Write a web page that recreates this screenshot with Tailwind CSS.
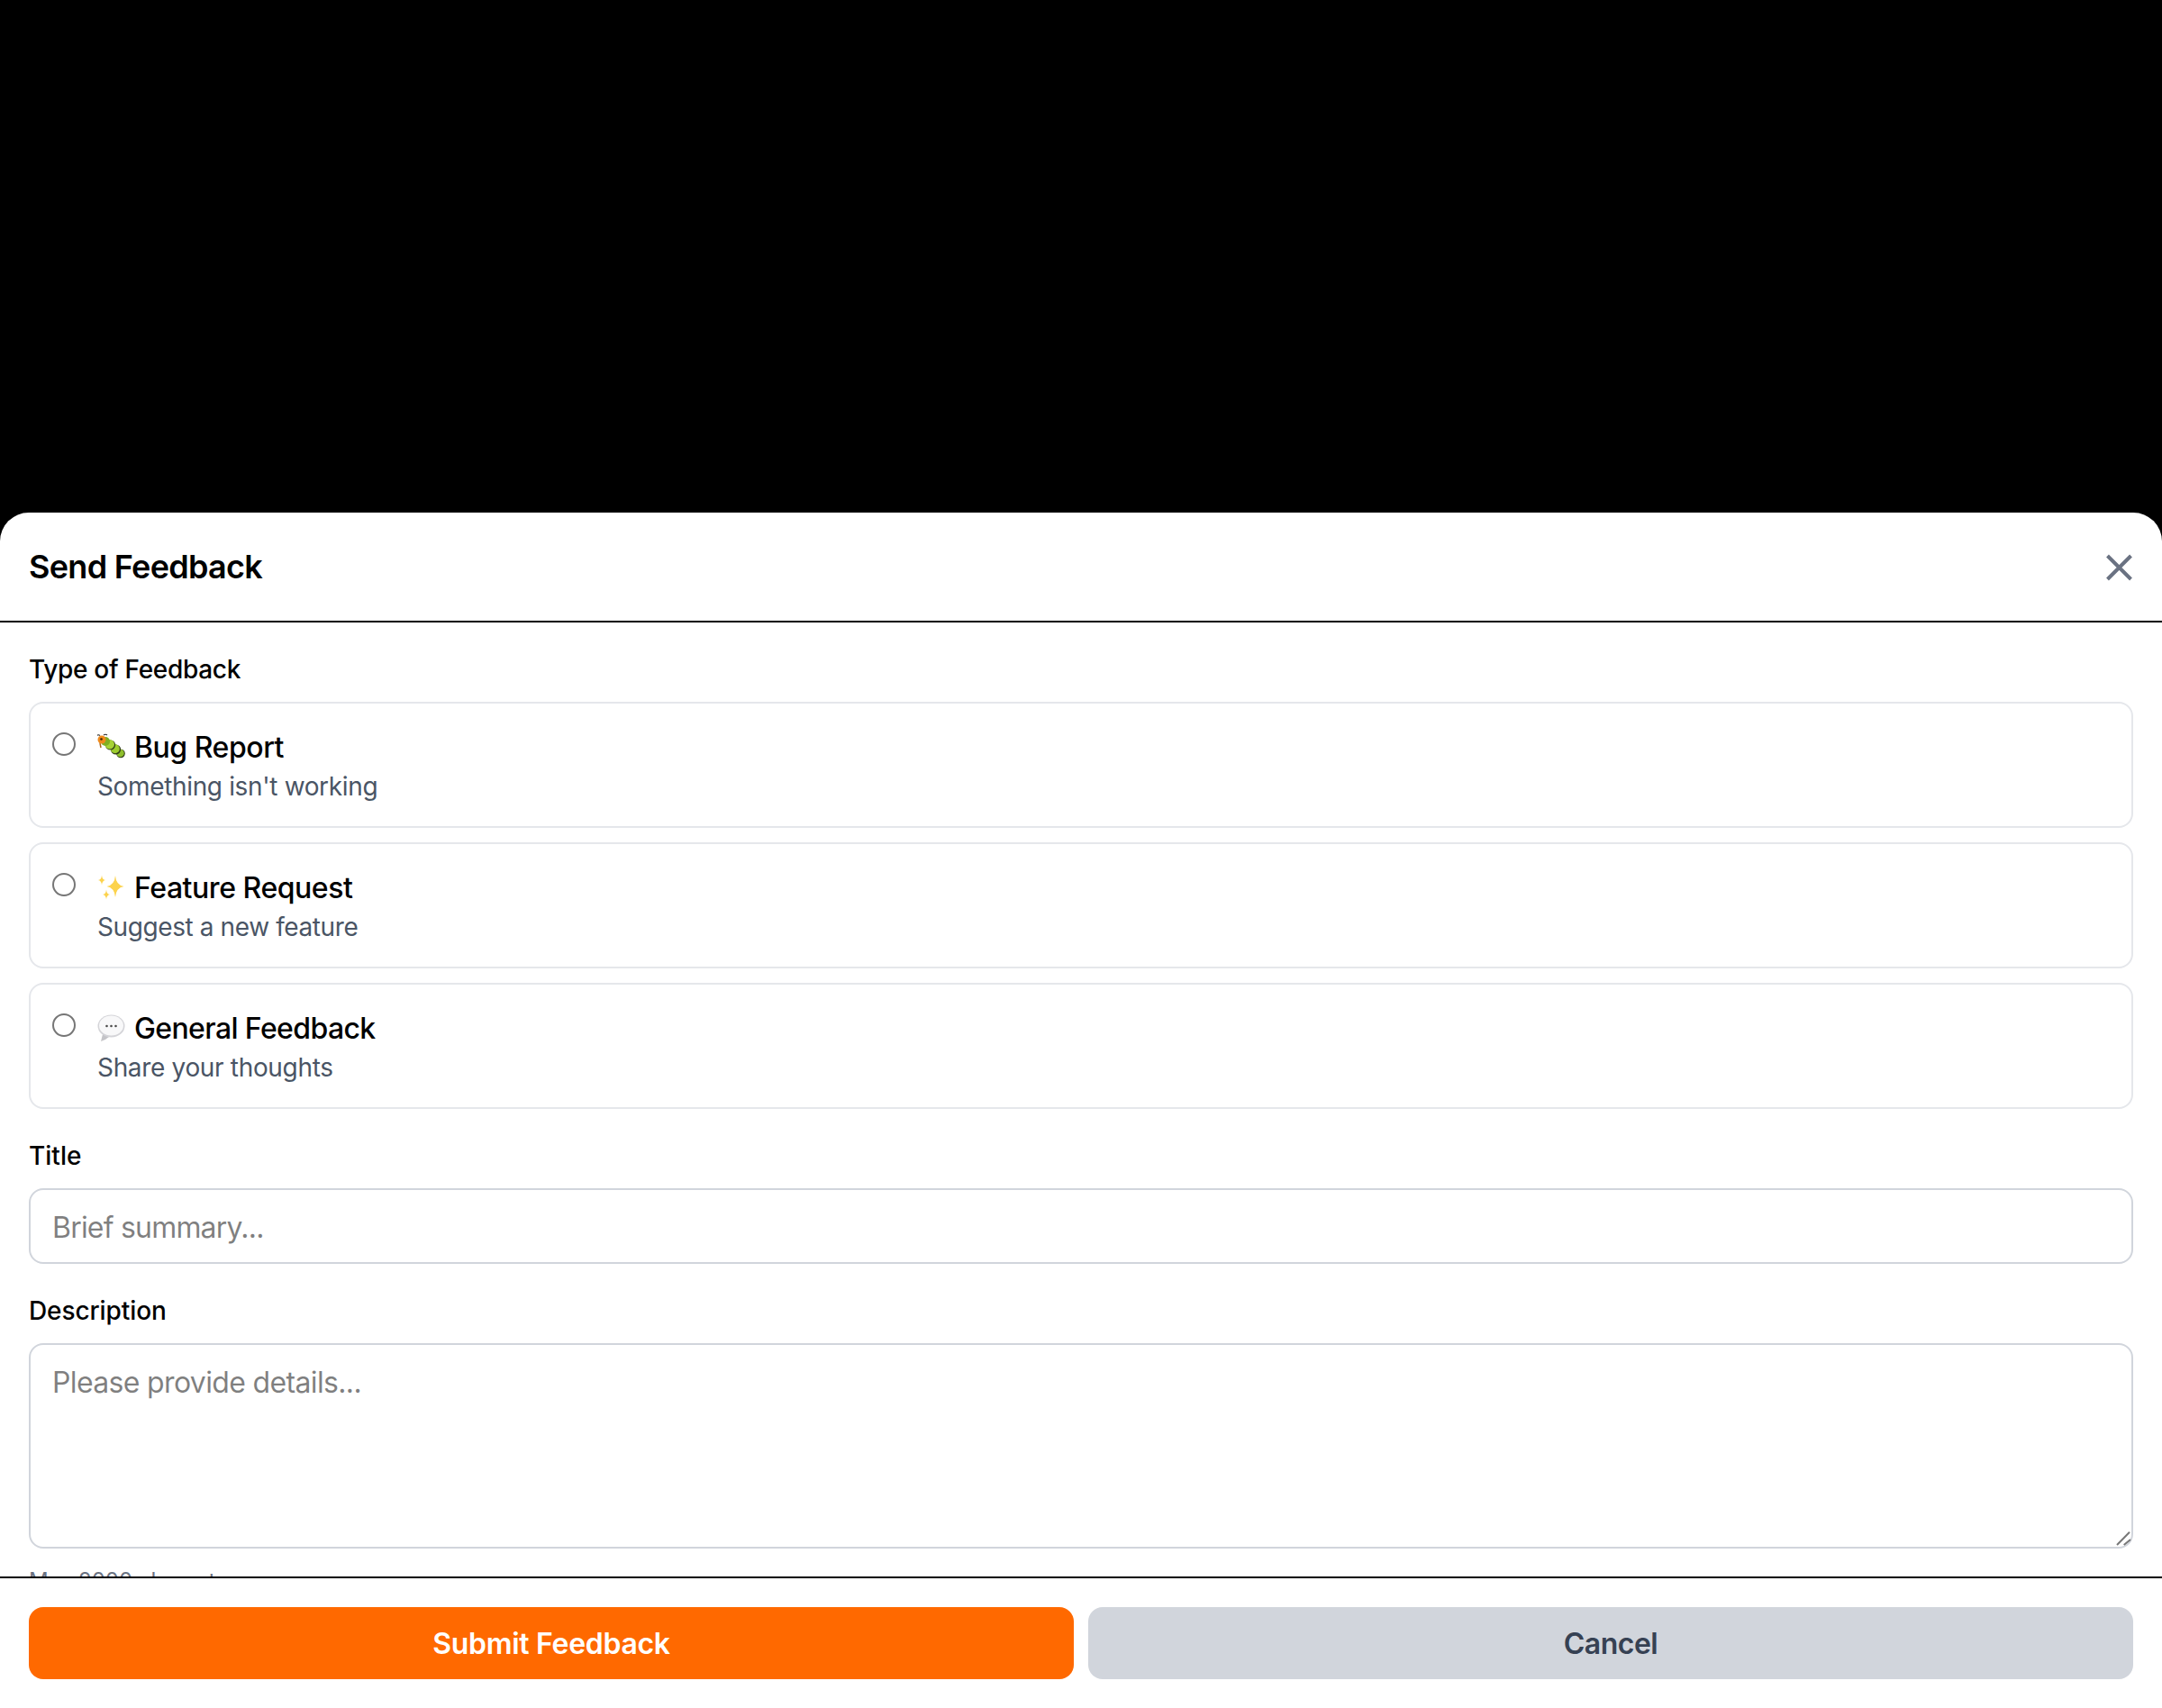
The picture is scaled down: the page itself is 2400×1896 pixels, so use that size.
<!DOCTYPE html>
<html lang="en">
<head>
  <meta charset="UTF-8" />
  <title>Send Feedback</title>
  <script src="https://cdn.jsdelivr.net/npm/@tailwindcss/browser@4"></script>
</head>
<body class="bg-black font-['Inter',sans-serif] text-black">
  <div class="h-[1896px] flex flex-col justify-end overflow-hidden">
    <!-- Modal sheet -->
    <div class="h-[1327px] flex flex-col bg-white rounded-t-[32px]">

      <!-- Header -->
      <div class="h-[122px] shrink-0 flex items-center justify-between px-[32px] border-b-2 border-black">
        <h2 class="text-[36px] leading-[56px] font-semibold tracking-[-0.7px]">Send Feedback</h2>
        <svg class="w-[32px] h-[32px] text-gray-500" viewBox="0 0 32 32" fill="none" stroke="currentColor" stroke-width="4">
          <path d="M3.500 4l26 26M29.500 4L3.500 30" />
        </svg>
      </div>

      <!-- Form body -->
      <div class="flex-1 min-h-0 overflow-hidden px-[32px] pt-[32px]">
        <p class="text-[28px] leading-[40px] font-medium mb-[16px] tracking-[-0.3px]">Type of Feedback</p>

        <div class="flex flex-col gap-[16px] mb-[32px]">
          <label class="flex gap-[24px] h-[140px] p-[24px] border-2 border-gray-200 rounded-[16px]">
            <input type="radio" name="type" class="appearance-none w-[26px] h-[26px] mt-[8px] border-2 border-[#767676] rounded-full" />
            <span>
              <span class="flex items-center gap-[9px] pt-[2px] text-[32px] leading-[46px] font-medium tracking-[-0.46px]">
                <svg class="w-[32px] h-[32px] -mt-[2px]" viewBox="0 0 32 32">
                  <circle cx="26" cy="23.500" r="4.800" fill="#2f3a16" />
                  <circle cx="25.500" cy="23" r="4.300" fill="#8fbf2c" />
                  <circle cx="20.500" cy="19" r="5.600" fill="#2f3a16" />
                  <circle cx="19.800" cy="18.200" r="5" fill="#9ccc2e" />
                  <circle cx="14.500" cy="14" r="5.600" fill="#2f3a16" />
                  <circle cx="13.800" cy="13.200" r="5.200" fill="#a6d236" />
                  <circle cx="9" cy="10" r="5" fill="#7fae22" />
                  <path d="M3 12l1 5" stroke="#a8641a" stroke-width="1.500" />
                  <circle cx="5" cy="8" r="4.500" fill="#ef8a1c" />
                  <circle cx="4.500" cy="7.500" r="1.300" fill="#3a2408" />
                  <path d="M3 3.500Q1 2 0 3.500M7 3Q9 1.500 11 3" stroke="#2b2b2b" stroke-width="1.200" fill="none" />
                </svg>
                Bug Report
              </span>
              <span class="block text-[28px] leading-[40px] text-gray-600 tracking-[-0.35px]">Something isn't working</span>
            </span>
          </label>

          <label class="flex gap-[24px] h-[140px] p-[24px] border-2 border-gray-200 rounded-[16px]">
            <input type="radio" name="type" class="appearance-none w-[26px] h-[26px] mt-[8px] border-2 border-[#767676] rounded-full" />
            <span>
              <span class="flex items-center gap-[9px] pt-[2px] text-[32px] leading-[46px] font-medium tracking-[-0.46px]">
                <svg class="w-[32px] h-[32px] -mt-[2px]" viewBox="0 0 32 32" fill="#fcd34d">
                  <path d="M20 3Q20.800 13.500 29.500 15Q20.800 16.500 20 27Q19.200 16.500 10.500 15Q19.200 13.500 20 3Z" />
                  <path d="M5 2.500Q5.400 7.500 9 8Q5.400 8.500 5 13.500Q4.600 8.500 1 8Q4.600 7.500 5 2.500Z" />
                  <path d="M10 18.500Q10.400 23.500 14 24Q10.400 24.500 10 29.500Q9.600 24.500 6 24Q9.600 23.500 10 18.500Z" />
                </svg>
                Feature Request
              </span>
              <span class="block text-[28px] leading-[40px] text-gray-600 tracking-[-0.4px]">Suggest a new feature</span>
            </span>
          </label>

          <label class="flex gap-[24px] h-[140px] p-[24px] border-2 border-gray-200 rounded-[16px]">
            <input type="radio" name="type" class="appearance-none w-[26px] h-[26px] mt-[8px] border-2 border-[#767676] rounded-full" />
            <span>
              <span class="flex items-center gap-[9px] pt-[2px] text-[32px] leading-[46px] font-medium tracking-[-0.62px]">
                <svg class="w-[32px] h-[32px] -mt-[2px]" viewBox="0 0 32 32">
                  <path d="M6 23L4 31Q10 29 13 26Z" fill="#c4c4c8" />
                  <ellipse cx="15.500" cy="14" rx="15" ry="12.500" fill="#d4d4d8" />
                  <ellipse cx="15.500" cy="13.500" rx="13.500" ry="11" fill="#f8f8f9" />
                  <circle cx="10.500" cy="14" r="1.300" fill="#4a4a4a" />
                  <circle cx="15.500" cy="14" r="1.300" fill="#4a4a4a" />
                  <circle cx="20.500" cy="14" r="1.300" fill="#4a4a4a" />
                </svg>
                General Feedback
              </span>
              <span class="block text-[28px] leading-[40px] text-gray-600 tracking-[-0.33px]">Share your thoughts</span>
            </span>
          </label>
        </div>

        <label class="block text-[28px] leading-[40px] font-medium mb-[16px]">Title</label>
        <input type="text" placeholder="Brief summary..." class="block w-full h-[84px] px-[24px] pt-[2px] text-[32px] tracking-[-0.8px] border-2 border-gray-300 rounded-[16px] mb-[32px]" />

        <label class="block text-[28px] leading-[40px] font-medium mb-[16px] tracking-[-0.1px]">Description</label>
        <div class="relative">
          <textarea placeholder="Please provide details..." class="block w-full h-[228px] px-[24px] pt-[18px] text-[32px] leading-[48px] tracking-[-0.65px] border-2 border-gray-300 rounded-[16px] resize-none"></textarea>
          <svg class="absolute right-0 bottom-0 w-[24px] h-[24px]" viewBox="0 0 24 24" fill="none" stroke="#777777" stroke-width="2">
            <path d="M6 20L20 5.700M13.700 20L21 14" />
          </svg>
        </div>
        <p class="mt-[20px] text-[24px] leading-[32px] text-gray-500">Max 2000 characters</p>
      </div>

      <!-- Footer -->
      <div class="shrink-0 flex gap-[16px] p-[32px] border-t-2 border-black">
        <button class="flex-1 h-[80px] pt-[2px] rounded-[16px] bg-orange-500 text-white text-[32px] font-semibold tracking-[-0.3px]">Submit Feedback</button>
        <button class="flex-1 h-[80px] pt-[2px] rounded-[16px] bg-gray-300 text-gray-700 text-[32px] font-semibold tracking-[-0.5px]">Cancel</button>
      </div>
    </div>
  </div>
</body>
</html>
